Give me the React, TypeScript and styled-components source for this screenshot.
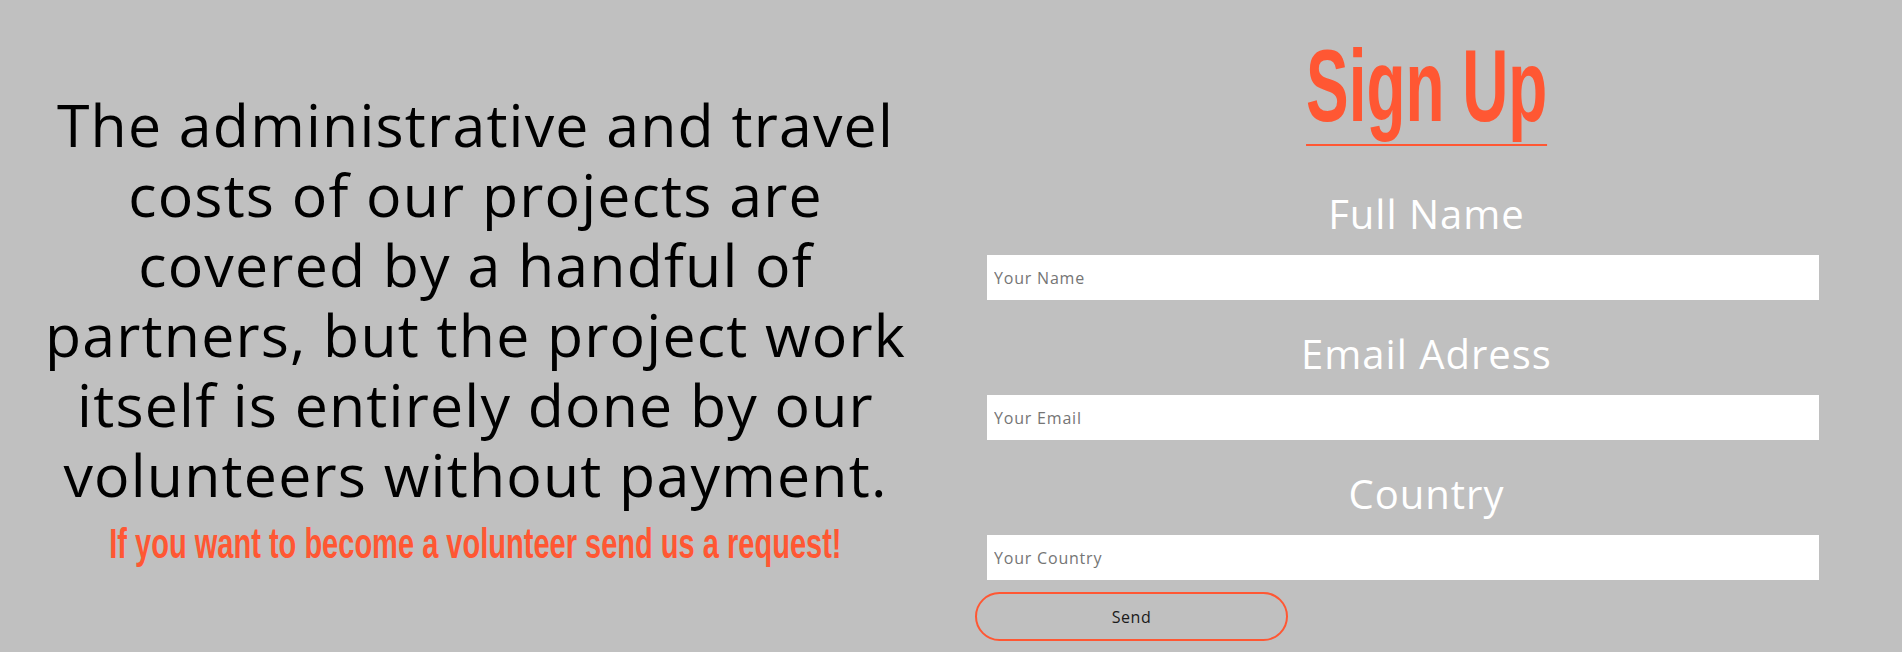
import styled, { createGlobalStyle } from "styled-components";

const ORANGE = "#ff5733";

const GlobalStyle = createGlobalStyle`
  html, body {
    margin: 0;
    padding: 0;
    background: #c0c0c0;
  }
  * {
    box-sizing: border-box;
  }
`;

const Page = styled.main`
  display: grid;
  grid-template-columns: 951px 951px;
  height: 652px;
  overflow: hidden;
  background: #c0c0c0;
  font-family: "Open Sans", "Liberation Sans", sans-serif;
`;

const InfoColumn = styled.section`
  display: flex;
  flex-direction: column;
  align-items: center;
  padding-top: 89px;
`;

const Statement = styled.p`
  margin: 0;
  font-size: 59px;
  line-height: 70px;
  font-weight: 400;
  letter-spacing: 1.2px;
  color: #000;
  text-align: center;
  white-space: nowrap;
`;

const CallOut = styled.h3`
  margin: 9px 0 0;
  font-family: "Liberation Sans", sans-serif;
  font-weight: 700;
  font-size: 43px;
  line-height: 50px;
  color: ${ORANGE};
  white-space: nowrap;
  transform: scaleX(0.675);
`;

const FormColumn = styled.form`
  display: flex;
  flex-direction: column;
  padding-top: 36px;
`;

const Title = styled.h1`
  align-self: center;
  margin: 0;
  padding-bottom: 8px;
  border-bottom: 2px solid ${ORANGE};
  font-family: "Liberation Sans", sans-serif;
  font-weight: 700;
  font-size: 102px;
  line-height: 100px;
  color: ${ORANGE};
  transform: scaleX(0.626);
`;

const Field = styled.div<{ $first?: boolean }>`
  display: flex;
  flex-direction: column;
  margin-top: ${(p) => (p.$first ? "44px" : "30px")};
`;

const Label = styled.label`
  display: block;
  text-align: center;
  font-size: 40px;
  line-height: 48px;
  letter-spacing: 1px;
  color: #fff;
`;

const Input = styled.input`
  margin: 17px 0 0 36px;
  width: 832px;
  height: 45px;
  padding: 0 7px;
  border: none;
  outline: none;
  background: #fff;
  font-family: inherit;
  font-size: 16px;
  letter-spacing: 0.8px;
  color: #333;

  &::placeholder {
    color: #757575;
  }
`;

const SendButton = styled.button`
  margin: 12px 0 0 24px;
  width: 313px;
  height: 49px;
  border: 2px solid ${ORANGE};
  border-radius: 25px;
  background: transparent;
  font-family: inherit;
  font-size: 16px;
  letter-spacing: 0.5px;
  color: #1a1a1a;
  cursor: pointer;
`;

const fields = [
  { id: "name", label: "Full Name", placeholder: "Your Name", type: "text" },
  { id: "email", label: "Email Adress", placeholder: "Your Email", type: "email" },
  { id: "country", label: "Country", placeholder: "Your Country", type: "text" },
];

export default function App() {
  return (
    <>
      <GlobalStyle />
      <Page>
        <InfoColumn>
          <Statement>
            The administrative and travel
            <br />
            costs of our projects are
            <br />
            covered by a handful of
            <br />
            partners, but the project work
            <br />
            itself is entirely done by our
            <br />
            volunteers without payment.
          </Statement>
          <CallOut>If you want to become a volunteer send us a request!</CallOut>
        </InfoColumn>

        <FormColumn onSubmit={(e) => e.preventDefault()}>
          <Title>Sign Up</Title>
          {fields.map((f, i) => (
            <Field key={f.id} $first={i === 0}>
              <Label htmlFor={f.id}>{f.label}</Label>
              <Input id={f.id} type={f.type} placeholder={f.placeholder} />
            </Field>
          ))}
          <SendButton type="submit">Send</SendButton>
        </FormColumn>
      </Page>
    </>
  );
}
